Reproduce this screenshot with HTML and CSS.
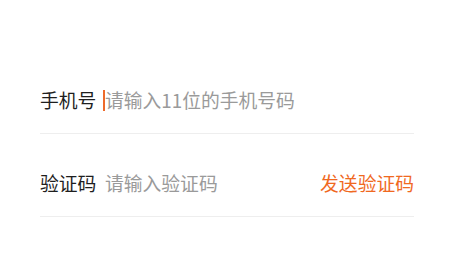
FILE: index.html
```html
<!DOCTYPE html>
<html lang="zh-CN">
<head>
<meta charset="utf-8">
<link rel="stylesheet" href="styles.css">
</head>
<body>
<div class="form">
  <div class="row">
    <span class="label">手机号</span>
    <div class="field">
      <span class="caret"></span>
      <span class="placeholder">请输入11位的手机号码</span>
    </div>
  </div>
  <div class="row">
    <span class="label">验证码</span>
    <div class="field">
      <span class="placeholder">请输入验证码</span>
    </div>
    <span class="send">发送验证码</span>
  </div>
</div>
</body>
</html>
```
FILE: styles.css
```css
html, body {
  margin: 0;
  padding: 0;
  background: #ffffff;
}
body {
  font-family: "Noto Sans CJK SC", "Noto Sans", sans-serif;
  font-size: 18.8px;
}
.form {
  padding: 51px 35px 0 40px;
}
.row {
  display: flex;
  align-items: center;
  height: 66px;
  border-bottom: 1px solid #eeeeee;
  margin-top: 16px;
}
.label {
  color: #1e1e1e;
  width: 57px;
  margin-right: 6px;
  white-space: nowrap;
  line-height: 1;
}
.field {
  flex: 1;
  display: flex;
  align-items: center;
}
.caret {
  width: 2px;
  height: 21px;
  background: #ee6a2a;
}
.placeholder {
  color: #9a9a9a;
  line-height: 1;
  margin-left: 2px;
}
.caret + .placeholder {
  margin-left: 0;
}
.send {
  color: #f0691f;
  line-height: 1;
}
```
